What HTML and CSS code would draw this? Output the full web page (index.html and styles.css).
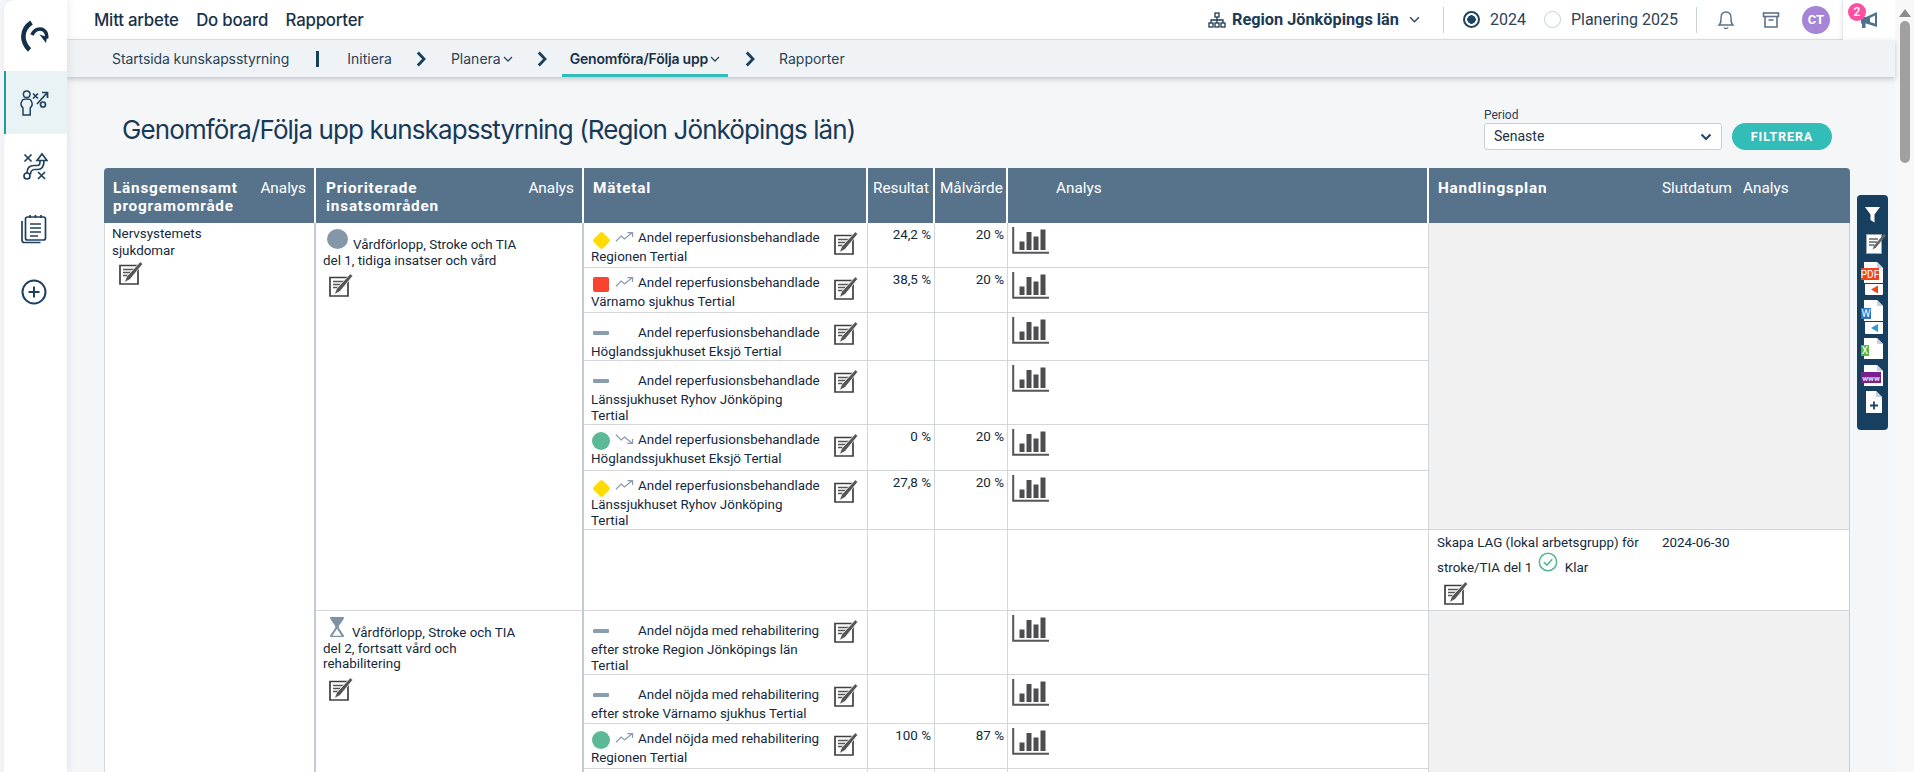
FILE: index.html
```html
<!DOCTYPE html>
<html lang="sv">
<head>
<meta charset="utf-8">
<title>Genomföra/Följa upp kunskapsstyrning</title>
<link rel="stylesheet" href="styles.css">
</head>
<body>
<svg class="defs" width="0" height="0" aria-hidden="true">
  <defs>
    <symbol id="i-edit" viewBox="0 0 24 24">
      <path d="M1 4.500H19V23H1Z" fill="#fff" stroke="#3f3f3f" stroke-width="1.700"/>
      <path d="M4 8.500H15.500M4 11.500H13.500M4 14.500H10.500" stroke="#555" stroke-width="1.400" fill="none"/>
      <path d="M21.300 .8 23.800 2.900 11 18.500 5.300 21.500 7.500 15.800Z" fill="#555" stroke="#fff" stroke-width=".8"/>
    </symbol>
    <symbol id="i-chart" viewBox="0 0 37 27">
      <path d="M1.200 0V25.800H37" fill="none" stroke="#555" stroke-width="2"/>
      <path d="M7.500 14.500h5V23h-5ZM14.500 5h5v18h-5ZM21.500 9.500h5V23h-5ZM28.500 2.500h5V23h-5Z" fill="#4d4d4f"/>
    </symbol>
    <symbol id="i-up" viewBox="0 0 20 12">
      <path d="M1 10.500 6.500 5 10 8 18 1.500M13 1.500h5.500V6" fill="none" stroke="#8a9cae" stroke-width="1.300"/>
    </symbol>
    <symbol id="i-down" viewBox="0 0 20 12">
      <path d="M1 1.500 6.500 7 10 4 18 10.500M13 10.500h5.500V6" fill="none" stroke="#8a9cae" stroke-width="1.300"/>
    </symbol>
    <symbol id="i-chev" viewBox="0 0 10 16">
      <path d="M1.800 1.500 8 8 1.800 14.500" fill="none" stroke="#17405f" stroke-width="2.800"/>
    </symbol>
    <symbol id="i-small-chev" viewBox="0 0 10 6">
      <path d="M1 1 5 5 9 1" fill="none" stroke="#2b4a63" stroke-width="1.300"/>
    </symbol>
  </defs>
</svg>

<aside class="sidebar">
  <div class="logo">
    <svg width="30" height="32" viewBox="0 0 30 32" fill="none" stroke="#142f49"><path d="M10.500 30C2.500 22 1.500 10 12.500 2.500" stroke-width="4.600"/><path d="M13 15C15.500 8.500 23 7 26.500 12c1.300 2 1.500 4 1 6.500" stroke-width="3.600"/><path d="M20.500 14.500l7.500 2.500-1 6z" fill="#142f49" stroke="none"/></svg>
  </div>
  <div class="side-item active">
    <svg width="30" height="28" viewBox="0 0 30 28" fill="none" stroke="#1e4260" stroke-width="1.500"><circle cx="7.700" cy="5.300" r="3.300"/><path d="M4 19C2 17 1.500 15 2.500 13 3.500 10 5 10 7.700 10c2.700 0 4 0 5 3 1 2 .5 4-1.500 6v7H4Z"/><path d="M14 4.500l5 5M19 4.500l-5 5M18 15 28 4M23 3.500h5.500V9" stroke-width="1.700"/><circle cx="24" cy="15.500" r="2.500" stroke-width="1.700"/></svg>
  </div>
  <div class="side-item">
    <svg width="28" height="28" viewBox="0 0 28 28" fill="none" stroke="#1e4260" stroke-width="1.700"><path d="M4.500 2.500l7 7M11.500 2.500l-7 7M18 20l7 7M25 20l-7 7"/><circle cx="7" cy="24" r="3"/><path d="M7 21C7 15 10 13.500 14 13.500h3c3 0 3-2 3-5"/><path d="M10.500 22.500c0-2.500 1.500-5 4-5h3c5 0 6.500-3 6.500-9"/><path d="M17 8.500 22 2l5 6.500Z"/></svg>
  </div>
  <div class="side-item">
    <svg width="26" height="30" viewBox="0 0 26 30" fill="none" stroke="#1e4260" stroke-width="1.700"><path d="M1 7v19c0 1.500 1 2.500 2.500 2.500h16"/><rect x="4.500" y="3" width="20" height="23" rx="2"/><path d="M9 1v3M14.500 1v3M20 1v3M9 10h11M9 14h11M9 18h11M9 22h8"/></svg>
  </div>
  <div class="side-item">
    <svg width="26" height="26" viewBox="0 0 26 26" fill="none" stroke="#1e4260" stroke-width="2"><circle cx="13" cy="13" r="11.500"/><path d="M13 7.500v11M7.500 13h11"/></svg>
  </div>
</aside>

<div class="main">
  <header class="topbar">
    <nav class="primary">
      <a>Mitt arbete</a>
      <a>Do board</a>
      <a>Rapporter</a>
    </nav>
    <div class="top-right">
      <div class="org">
        <svg width="18" height="16" viewBox="0 0 18 16" fill="none" stroke="#1e3a52" stroke-width="1.300"><rect x="7" y="1" width="4" height="4"/><rect x="1" y="11" width="4" height="4"/><rect x="7" y="11" width="4" height="4"/><rect x="13" y="11" width="4" height="4"/><path d="M9 5v6M3 11V8h12v3"/></svg>
        <span>Region Jönköpings län</span>
        <svg class="org-chev" width="11" height="7"><use href="#i-small-chev"/></svg>
      </div>
      <span class="vr vr-a"></span>
      <label class="radio"><span class="dot on"></span>2024</label>
      <label class="radio radio-b"><span class="dot"></span>Planering 2025</label>
      <span class="vr vr-b"></span>
      <svg class="bell" width="18" height="20" viewBox="0 0 18 20" fill="none" stroke="#5d7287" stroke-width="1.400"><path d="M2 15c2-2 2-3 2-7s2-6 5-6 5 2 5 6 0 5 2 7Z"/><path d="M7 17.500c.5 1.300 3.500 1.300 4 0"/></svg>
      <svg class="archive" width="18" height="18" viewBox="0 0 18 18" fill="none" stroke="#5d7287" stroke-width="1.600"><rect x="1.500" y="2" width="15" height="3.500"/><path d="M3 5.500V16h12V5.500M6.500 9h5"/></svg>
      <span class="avatar">CT</span>
      <div class="megaphone">
        <svg width="20" height="20" viewBox="0 0 20 20"><path d="M1 7h5l11-5v15L6 13.500H5.500v4.500H2v-4.500H1Z" fill="#4f7190"/><path d="M10 8 15 5.500v8L10 12Z" fill="#fff"/></svg>
        <span class="badge">2</span>
      </div>
    </div>
  </header>

  <nav class="subnav">
    <a class="sn-start">Startsida kunskapsstyrning</a>
    <span class="pipe"></span>
    <a class="sn-init">Initiera</a>
    <svg class="sn-chev" width="10" height="16"><use href="#i-chev"/></svg>
    <a class="sn-plan">Planera<svg width="10" height="6"><use href="#i-small-chev"/></svg></a>
    <svg class="sn-chev" width="10" height="16"><use href="#i-chev"/></svg>
    <a class="sn-active">Genomföra/Följa upp<svg width="10" height="6"><use href="#i-small-chev"/></svg></a>
    <svg class="sn-chev" width="10" height="16"><use href="#i-chev"/></svg>
    <a class="sn-rep">Rapporter</a>
  </nav>

  <main class="content">
    <div class="page-head">
      <h1>Genomföra/Följa upp kunskapsstyrning (Region Jönköpings län)</h1>
      <form class="filter">
        <div class="field">
          <span class="field-label">Period</span>
          <div class="select">Senaste
            <svg width="12" height="8" viewBox="0 0 12 8"><path d="M1.500 1.500 6 6l4.500-4.500" fill="none" stroke="#254a68" stroke-width="2.200"/></svg>
          </div>
        </div>
        <button type="button" class="btn">FILTRERA</button>
      </form>
    </div>

    <table class="grid">
      <colgroup>
        <col class="c-prog"><col class="c-area"><col class="c-meas"><col class="c-res"><col class="c-goal"><col class="c-chart"><col class="c-plan"><col class="c-date"><col class="c-an">
      </colgroup>
      <thead>
        <tr>
          <th class="thick-w first"><div class="th-split"><b>Länsgemensamt programområde</b><span>Analys</span></div></th>
          <th><div class="th-split"><b>Prioriterade insatsområden</b><span>Analys</span></div></th>
          <th><b>Mätetal</b></th>
          <th class="th-num">Resultat</th>
          <th class="th-num">Målvärde</th>
          <th class="th-analys">Analys</th>
          <th><b>Handlingsplan</b></th>
          <th class="th-date">Slutdatum</th>
          <th class="th-an last">Analys</th>
        </tr>
      </thead>
      <tbody>
        <tr class="h45">
          <td rowspan="11" class="prog thick">Nervsystemets<br>sjukdomar
            <svg class="edit edit-prog"><use href="#i-edit"/></svg>
          </td>
          <td rowspan="7" class="area thick">
            <p class="area-text"><span class="area-ic round"></span>Vårdförlopp, Stroke och TIA del 1, tidiga insatser och vård</p>
            <svg class="edit edit-area"><use href="#i-edit"/></svg>
          </td>
          <td class="meas"><svg class="edit"><use href="#i-edit"/></svg><span class="lead"><span class="st diamond"></span><svg class="trend"><use href="#i-up"/></svg></span>Andel reperfusionsbehandlade Regionen Tertial</td>
          <td class="num">24,2 %</td><td class="num">20 %</td>
          <td class="chart"><svg class="bars"><use href="#i-chart"/></svg></td>
          <td colspan="3" rowspan="6" class="gray"></td>
        </tr>
        <tr class="h45">
          <td class="meas"><svg class="edit"><use href="#i-edit"/></svg><span class="lead"><span class="st square"></span><svg class="trend"><use href="#i-up"/></svg></span>Andel reperfusionsbehandlade Värnamo sjukhus Tertial</td>
          <td class="num">38,5 %</td><td class="num">20 %</td>
          <td class="chart"><svg class="bars"><use href="#i-chart"/></svg></td>
        </tr>
        <tr class="h48">
          <td class="meas"><svg class="edit"><use href="#i-edit"/></svg><span class="lead lead-dash"><span class="st dash"></span></span>Andel reperfusionsbehandlade Höglandssjukhuset Eksjö Tertial</td>
          <td class="num"></td><td class="num"></td>
          <td class="chart"><svg class="bars"><use href="#i-chart"/></svg></td>
        </tr>
        <tr class="h64">
          <td class="meas"><svg class="edit"><use href="#i-edit"/></svg><span class="lead lead-dash"><span class="st dash"></span></span>Andel reperfusionsbehandlade Länssjukhuset Ryhov Jönköping<br>Tertial</td>
          <td class="num"></td><td class="num"></td>
          <td class="chart"><svg class="bars"><use href="#i-chart"/></svg></td>
        </tr>
        <tr class="h46">
          <td class="meas"><svg class="edit"><use href="#i-edit"/></svg><span class="lead"><span class="st circle"></span><svg class="trend"><use href="#i-down"/></svg></span>Andel reperfusionsbehandlade Höglandssjukhuset Eksjö Tertial</td>
          <td class="num">0 %</td><td class="num">20 %</td>
          <td class="chart"><svg class="bars"><use href="#i-chart"/></svg></td>
        </tr>
        <tr class="h59">
          <td class="meas"><svg class="edit"><use href="#i-edit"/></svg><span class="lead"><span class="st diamond"></span><svg class="trend"><use href="#i-up"/></svg></span>Andel reperfusionsbehandlade Länssjukhuset Ryhov Jönköping<br>Tertial</td>
          <td class="num">27,8 %</td><td class="num">20 %</td>
          <td class="chart"><svg class="bars"><use href="#i-chart"/></svg></td>
        </tr>
        <tr class="h81">
          <td class="meas"></td><td class="num"></td><td class="num"></td><td class="chart"></td>
          <td class="plan">Skapa LAG (lokal arbetsgrupp) för<br>stroke/TIA del 1
            <svg class="check" viewBox="0 0 20 20"><circle cx="10" cy="10" r="8.700" fill="none" stroke="#55b695" stroke-width="1.500"/><path d="M5.800 10.200 8.800 13l5.500-5.800" fill="none" stroke="#55b695" stroke-width="1.600"/></svg>
            <span class="klar">Klar</span>
            <svg class="edit edit-plan"><use href="#i-edit"/></svg>
          </td>
          <td class="plan date">2024-06-30</td>
          <td class="plan-end"></td>
        </tr>
        <tr class="h63">
          <td rowspan="4" class="area thick">
            <p class="area-text"><svg class="area-ic" viewBox="0 0 17 22"><path d="M1 0h15v2l-5.500 8v2l5.500 8v2H1v-2l5.500-8v-2L1 2Z" fill="#7e92a6"/><path d="M8.500 13 3.500 20.500h10Z" fill="#fff"/></svg>Vårdförlopp, Stroke och TIA del 2, fortsatt vård och rehabilitering</p>
            <svg class="edit edit-area"><use href="#i-edit"/></svg>
          </td>
          <td class="meas"><svg class="edit"><use href="#i-edit"/></svg><span class="lead lead-dash"><span class="st dash"></span></span>Andel nöjda med rehabilitering efter stroke Region Jönköpings län Tertial</td>
          <td class="num"></td><td class="num"></td>
          <td class="chart"><svg class="bars"><use href="#i-chart"/></svg></td>
          <td colspan="3" rowspan="4" class="gray"></td>
        </tr>
        <tr class="h49">
          <td class="meas"><svg class="edit"><use href="#i-edit"/></svg><span class="lead lead-dash"><span class="st dash"></span></span>Andel nöjda med rehabilitering efter stroke Värnamo sjukhus Tertial</td>
          <td class="num"></td><td class="num"></td>
          <td class="chart"><svg class="bars"><use href="#i-chart"/></svg></td>
        </tr>
        <tr class="h45">
          <td class="meas"><svg class="edit"><use href="#i-edit"/></svg><span class="lead"><span class="st circle"></span><svg class="trend"><use href="#i-up"/></svg></span>Andel nöjda med rehabilitering Regionen Tertial</td>
          <td class="num">100 %</td><td class="num">87 %</td>
          <td class="chart"><svg class="bars"><use href="#i-chart"/></svg></td>
        </tr>
        <tr class="h45">
          <td class="meas"></td><td class="num"></td><td class="num"></td><td class="chart"></td>
        </tr>
      </tbody>
    </table>

    <div class="tools">
      <svg width="31" height="235" viewBox="0 0 31 235">
        <path d="M8 12H23L17.500 19.500V27.500L13.500 25V19.500Z" fill="#fff"/>
        <g transform="translate(9 39)">
          <rect x=".5" y=".5" width="15" height="19" fill="#fff" stroke="#9aa5ae"/>
          <path d="M3 5h9M3 8h8M3 11h5" stroke="#666" stroke-width="1.300"/>
          <path d="M18 0 20 1.500 10 13.500l-3.500 2 1.500-4Z" fill="#666"/>
        </g>
        <g transform="translate(0 67)">
          <path d="M7 0h13l6 6v15H7Z" fill="#fff"/>
          <path d="M20 0l6 6h-6Z" fill="#c9d2da"/>
          <rect x="4" y="6" width="18" height="12" fill="#f3421c"/>
          <text x="13" y="15.500" class="t-lbl" text-anchor="middle">PDF</text>
          <path d="M8 22h18v10q0 1-1 1H9q-1 0-1-1Z" fill="#fff"/>
          <path d="M14 27.500l7-4v8Z" fill="#f3421c"/>
        </g>
        <g transform="translate(0 105)">
          <path d="M7 0h13l6 6v15H7Z" fill="#fff"/>
          <path d="M20 0l6 6h-6Z" fill="#c9d2da"/>
          <rect x="4" y="8" width="10" height="11" fill="#2b73c4"/>
          <text x="9" y="17" class="t-lbl" text-anchor="middle">W</text>
          <path d="M8 22h18v11q0 1-1 1H9q-1 0-1-1Z" fill="#fff"/>
          <path d="M14 28l7-4v8Z" fill="#2b9bd6"/>
        </g>
        <g transform="translate(0 143)">
          <path d="M7 0h13l6 6v15H7Z" fill="#fff"/>
          <path d="M20 0l6 6h-6Z" fill="#c9d2da"/>
          <rect x="4" y="7" width="8" height="11" fill="#56b845"/>
          <text x="8" y="16" class="t-lbl" text-anchor="middle">X</text>
        </g>
        <g transform="translate(0 170)">
          <path d="M7 0h13l6 6v15H7Z" fill="#fff"/>
          <path d="M20 0l6 6h-6Z" fill="#c9d2da"/>
          <rect x="4" y="7" width="20" height="11" fill="#7a1f8e"/>
          <text x="14" y="15.500" class="t-www" text-anchor="middle">www</text>
        </g>
        <g transform="translate(0 196)">
          <path d="M9 0h10l6 6v16H9Z" fill="#fff"/>
          <path d="M19 0l6 6h-6Z" fill="#c9d2da"/>
          <path d="M17 10.500v8M13 14.500h8" stroke="#1d4462" stroke-width="1.800"/>
        </g>
      </svg>
    </div>
  </main>
</div>

<div class="scrollbar">
  <div class="sb-track">
    <span class="sb-up"></span>
    <span class="sb-thumb"></span>
  </div>
</div>
</body>
</html>
```

FILE: styles.css
```css
* { box-sizing: border-box; }
html, body { margin: 0; height: 100%; }
body {
  width: 1919px;
  height: 772px;
  overflow: hidden;
  display: flex;
  background: #f5f6f8;
  font-family: Roboto, "Noto Sans", sans-serif;
  color: #14293d;
}
.defs { position: absolute; }

/* sidebar */
.sidebar {
  flex: none;
  width: 63px;
  margin-left: 4px;
  background: #fff;
  border-radius: 10px 0 0 0;
  box-shadow: 2px 0 8px rgba(60, 80, 100, .10);
  position: relative;
  z-index: 3;
}
.logo { height: 71px; display: flex; align-items: center; justify-content: center; padding-right: 3px; }
.side-item { height: 63px; display: flex; align-items: center; justify-content: center; padding-right: 3px; }
.side-item.active { background: #e9f2f4; border-left: 2px solid #1f9d98; padding-right: 5px; }

/* main */
.main { flex: none; width: 1828px; display: flex; flex-direction: column; }

.topbar {
  height: 40px;
  flex: none;
  background: #fff;
  border-bottom: 1px solid #dfe3e7;
  display: flex;
  align-items: center;
  padding-left: 27px;
}
.primary { display: flex; gap: 17.500px; font: 500 16.800px Inter, sans-serif; color: #17324b; letter-spacing: -.2px; }
.top-right { margin-left: auto; height: 100%; display: flex; align-items: center; }
.org { display: flex; align-items: center; font-weight: 700; font-size: 16.300px; color: #1b3a55; }
.org span { margin-left: 6px; }
.org-chev { margin-left: 10px; }
.vr { width: 1px; height: 26px; background: #c9d1d8; }
.vr-a { margin-left: 23px; }
.radio { display: flex; align-items: center; font-size: 16px; color: #2c4257; }
.radio:first-of-type { margin-left: 19px; }
.radio-b { margin-left: 18px; }
.dot { width: 17px; height: 17px; border-radius: 50%; border: 1.500px solid #c6cfd7; margin-right: 10px; }
.dot.on { border: 2px solid #1d4462; background: radial-gradient(circle, #1d4462 0 4px, #fff 4.500px); }
.vr-b { margin-left: 18px; }
.bell { margin-left: 20px; }
.archive { margin-left: 27px; }
.avatar {
  width: 28px; height: 28px; margin-left: 22px;
  border-radius: 50%; background: #a485d6; color: #fff;
  font: 700 13px/28px Roboto, sans-serif; text-align: center;
}
.megaphone {
  width: 53px; height: 40px; margin-left: 12px;
  border-left: 1px solid #e6e9ec;
  box-shadow: 0 1px 4px rgba(50, 70, 90, .15);
  background: #fff;
  display: flex; align-items: center; justify-content: flex-end;
  padding-right: 15px;
  position: relative;
}
.badge {
  position: absolute; left: 5px; top: 3px;
  width: 18px; height: 18px; border-radius: 50%;
  background: #ff4fa0; color: #fff;
  font: 500 12px/18px Roboto, sans-serif; text-align: center;
}

.subnav {
  height: 37px;
  flex: none;
  background: #f0f3f5;
  box-shadow: 0 2px 5px rgba(50, 70, 90, .28);
  display: flex;
  align-items: center;
  font: 400 14px Inter, sans-serif;
  color: #2a4257;
  position: relative;
  z-index: 2;
}
.subnav a { display: flex; align-items: center; height: 100%; }
.subnav a svg { margin-left: 2px; }
.sn-start { margin-left: 45px; letter-spacing: -.1px; }
.pipe { width: 3px; height: 16px; background: #17405f; margin-left: 27px; }
.sn-init { margin-left: 28px; }
.sn-chev { margin-left: 24px; }
.sn-plan { margin-left: 25px; }
.subnav a.sn-active {
  margin-left: 15px; padding: 3px 8px 0 8px;
  border-bottom: 3px solid #33bdb8;
  font-weight: 600; color: #1a3146; letter-spacing: -.2px;
}
.sn-active + .sn-chev { margin-left: 17px; }
.sn-rep { margin-left: 24px; }

.content { flex: 1; position: relative; padding-left: 37px; overflow: hidden; }

.page-head { height: 91px; display: flex; align-items: flex-start; width: 1728px; }
.page-head h1 {
  margin: 38px 0 0 18px;
  font: 400 26px/30px Inter, sans-serif;
  letter-spacing: -.9px;
  color: #173a58;
}
.filter { margin-left: auto; padding-top: 31px; display: flex; align-items: flex-end; gap: 10px; }
.field { width: 238px; }
.field-label { display: block; font-size: 12px; line-height: 15px; color: #2c4257; }
.select {
  height: 27px; background: #fff;
  border: 1px solid #c7ced4; border-radius: 3px;
  font-size: 14px; line-height: 25px; padding: 0 9px;
  display: flex; justify-content: space-between; align-items: center;
  color: #1a3146;
}
.btn {
  width: 100px; height: 27px; border: 0; border-radius: 14px;
  background: #33bdb8; color: #fff;
  font: 700 12.500px Roboto, sans-serif; letter-spacing: .9px;
}

/* table */
.grid { border-collapse: separate; border-spacing: 0; table-layout: fixed; width: 1746px; font-size: 13.400px; }
.c-prog { width: 212px; } .c-area { width: 268px; } .c-meas { width: 284px; }
.c-res { width: 67px; } .c-goal { width: 73px; } .c-chart { width: 421px; }
.c-plan { width: 232px; } .c-date { width: 82px; } .c-an { width: 107px; }

th {
  height: 55px;
  background: #57738c;
  color: #fff;
  font-weight: 400; font-size: 15.300px; line-height: 18px;
  text-align: left; vertical-align: top;
  padding: 11px 8px 0 9px;
  border-right: 2px solid #fff;
}
th b { font-weight: 700; letter-spacing: .8px; }
th.first { border-top-left-radius: 4px; }
th.last { border-top-right-radius: 4px; border-right: 0; }
.th-split { display: flex; justify-content: space-between; }
.th-split b { width: 150px; }
.grid th:nth-child(2) { padding-left: 10px; }
.grid th:nth-child(2) .th-split b { width: 170px; }
th.th-num { padding-left: 5px; padding-right: 0; }
th.th-analys { padding-left: 48px; }
th.th-date { border-right: 0; padding-left: 1px; padding-right: 0; }
th.th-an { padding-left: 0; padding-right: 0; }
th:nth-child(7), th:nth-child(8) { border-right: 0; }

td {
  background: #fff;
  vertical-align: top;
  border-right: 1px solid #d4d7da;
  border-bottom: 1px solid #d4d7da;
  padding: 0;
  line-height: 16px;
}
td.thick { border-right: 2px solid #c0cbd5; }
td.prog { padding: 2px 7px; border-left: 1px solid #d4d7da; line-height: 17px; }
td.area { padding: 6px 7px; }
.area-text { margin: 0; width: 200px; line-height: 15.500px; }
.area-ic { display: inline-block; width: 20px; height: 20px; margin: 0 5px 0 4px; vertical-align: 0; }
.round { border-radius: 50%; background: #8497a9; width: 21px; }
.edit { display: block; width: 24px; height: 24px; }
.edit-prog { margin: 2px 0 0 7px; }
.edit-area { margin: 5px 0 0 6px; }
td.meas { padding: 3px 9px 0 7px; }
.meas .edit { float: right; margin: 5px 0 0 11px; }
.lead { display: inline-block; width: 47px; height: 23px; vertical-align: -7px; position: relative; }
.lead-dash { height: 28px; }
.st { position: absolute; left: 2px; top: 4px; }
.diamond { width: 13px; height: 13px; left: 3.500px; top: 7.500px; background: #ffdb00; transform: rotate(45deg); border-radius: 2px; }
.square { width: 16px; height: 15px; top: 6px; background: #f9432f; border-radius: 2px; left: 2px; }
.circle { width: 18px; height: 18px; top: 4px; left: 1px; border-radius: 50%; background: #5cb995; }
.dash { width: 16px; height: 4px; top: 15px; left: 2px; background: #8a9cae; border-radius: 1px; }
.trend { position: absolute; left: 24px; top: 5px; width: 19px; height: 12px; }
.num { text-align: right; padding: 4px 3px 0 0; }
.chart { padding: 4px 0 0 4px; }
.bars { display: block; width: 37px; height: 27px; }
.gray { background: #f1f1f1; border-right: 1px solid #c8cdd2; }
td.plan { padding: 3px 8px 0; border-right: 0; line-height: 19px; }
td.plan.date { padding-left: 1px; }
.plan-end { border-right: 1px solid #c8cdd2; }
.check { width: 20px; height: 20px; margin: 0 3px 0 2px; vertical-align: 0; }
.klar { margin-left: 1px; }
.edit-plan { margin: 4px 0 0 7px; }

.h45 { height: 45px; } .h46 { height: 46px; } .h48 { height: 48px; } .h49 { height: 49px; }
.h59 { height: 59px; } .h63 { height: 63px; } .h64 { height: 64px; } .h81 { height: 81px; }

.tools {
  position: absolute; left: 1790px; top: 118px;
  width: 31px; height: 235px;
  background: #163f60; border-radius: 4px;
}
.tools svg { display: block; }
.t-lbl { fill: #fff; font: 400 10px Roboto, sans-serif; }
.t-www { fill: #e9dcf0; font: 700 8px Roboto, sans-serif; }

/* browser scrollbar */
.scrollbar { flex: none; width: 24px; background: #fff; }
.sb-track { width: 19px; height: 100%; background: #f8f8f8; position: relative; display: flex; flex-direction: column; align-items: center; }
.sb-up { width: 0; height: 0; margin-top: 9px; border: 6px solid transparent; border-top: 0; border-bottom: 8px solid #8c8c8c; }
.sb-thumb { width: 10px; height: 142px; margin-top: 4px; border-radius: 5px; background: #a0a0a0; }
```
